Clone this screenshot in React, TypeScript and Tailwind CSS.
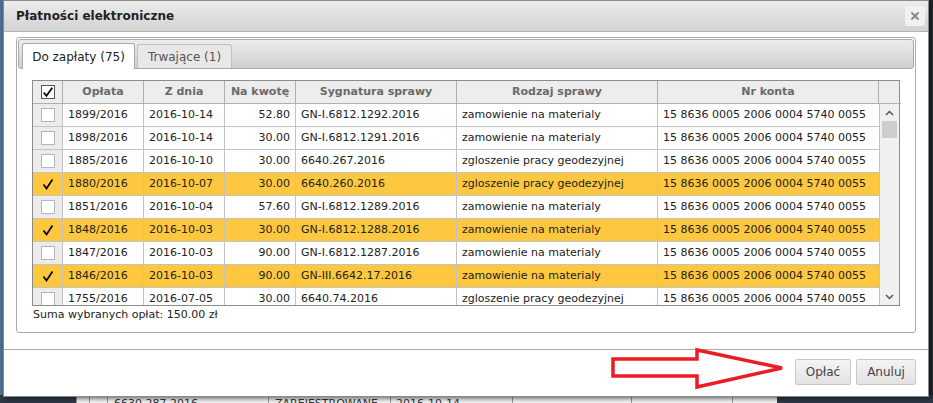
import { X } from "lucide-react";

type Row = {
  nr: string;
  date: string;
  amount: string;
  sig: string;
  kind: string;
  checked?: boolean;
};

const ACCOUNT = "15 8636 0005 2006 0004 5740 0055";

const rows: Row[] = [
  { nr: "1899/2016", date: "2016-10-14", amount: "52.80", sig: "GN-I.6812.1292.2016", kind: "zamowienie na materialy" },
  { nr: "1898/2016", date: "2016-10-14", amount: "30.00", sig: "GN-I.6812.1291.2016", kind: "zamowienie na materialy" },
  { nr: "1885/2016", date: "2016-10-10", amount: "30.00", sig: "6640.267.2016", kind: "zgloszenie pracy geodezyjnej" },
  { nr: "1880/2016", date: "2016-10-07", amount: "30.00", sig: "6640.260.2016", kind: "zgloszenie pracy geodezyjnej", checked: true },
  { nr: "1851/2016", date: "2016-10-04", amount: "57.60", sig: "GN-I.6812.1289.2016", kind: "zamowienie na materialy" },
  { nr: "1848/2016", date: "2016-10-03", amount: "30.00", sig: "GN-I.6812.1288.2016", kind: "zamowienie na materialy", checked: true },
  { nr: "1847/2016", date: "2016-10-03", amount: "90.00", sig: "GN-I.6812.1287.2016", kind: "zamowienie na materialy" },
  { nr: "1846/2016", date: "2016-10-03", amount: "90.00", sig: "GN-III.6642.17.2016", kind: "zamowienie na materialy", checked: true },
  { nr: "1755/2016", date: "2016-07-05", amount: "30.00", sig: "6640.74.2016", kind: "zgloszenie pracy geodezyjnej" },
];

const cols = "grid grid-cols-[30px_81px_81px_71px_161px_201px_221px]";

function Check({ checked }: { checked?: boolean }) {
  if (checked) {
    return (
      <svg width="14" height="14" viewBox="0 0 14 14">
        <path d="M2.5 7.5 L5.5 11.5 L11.5 2.5" fill="none" stroke="#000" strokeWidth="1.7" />
      </svg>
    );
  }
  return <div className="h-[14px] w-[14px] border border-[#b5b5b5] bg-white" />;
}

function TableRow({ r }: { r: Row }) {
  const bg = r.checked ? "bg-[#fdc83f]" : "bg-white";
  const cell = "flex h-[23px] items-center border-b border-r border-[#c3c3c3] px-[5px] whitespace-nowrap overflow-hidden";
  return (
    <div className={`${cols} ${bg}`}>
      <div className={`${cell} justify-center ${r.checked ? "" : "bg-[#ececec]"}`}>
        <Check checked={r.checked} />
      </div>
      <div className={cell}>{r.nr}</div>
      <div className={cell}>{r.date}</div>
      <div className={`${cell} justify-end`}>{r.amount}</div>
      <div className={cell}>{r.sig}</div>
      <div className={cell}>{r.kind}</div>
      <div className={`${cell} border-r-0`}>{ACCOUNT}</div>
    </div>
  );
}

function Header() {
  const h = "flex h-[23px] items-center justify-center border-r border-b border-[#b0b0b0] font-bold text-[#6a6a6a]";
  return (
    <div className="grid grid-cols-[30px_81px_81px_71px_161px_201px_221px_22px] bg-[#ededed]">
      <div className={h}>
        <div className="flex h-[14px] w-[14px] items-center justify-center border border-[#555] bg-white">
          <svg width="12" height="12" viewBox="0 0 14 14">
            <path d="M2 7.5 L5.2 11.5 L12 2" fill="none" stroke="#000" strokeWidth="2" />
          </svg>
        </div>
      </div>
      <div className={h}>Opłata</div>
      <div className={h}>Z dnia</div>
      <div className={h}>Na kwotę</div>
      <div className={h}>Sygnatura sprawy</div>
      <div className={h}>Rodzaj sprawy</div>
      <div className={h}>Nr konta</div>
      <div className="h-[23px] border-b border-[#b0b0b0]" />
    </div>
  );
}

function Scrollbar() {
  return (
    <div className="flex w-[22px] flex-col items-center border-l border-[#c3c3c3] bg-[#f0f0f0]">
      <svg className="mt-[6px]" width="9" height="6" viewBox="0 0 9 6">
        <path d="M1 5 L4.5 1.5 L8 5" fill="none" stroke="#555" strokeWidth="1.5" />
      </svg>
      <div className="mt-[5px] h-[17px] w-[15px] bg-[#cdcdcd]" />
      <div className="flex-1" />
      <svg className="mb-[5px]" width="9" height="6" viewBox="0 0 9 6">
        <path d="M1 1 L4.5 4.5 L8 1" fill="none" stroke="#555" strokeWidth="1.5" />
      </svg>
    </div>
  );
}

export default function App() {
  return (
    <div
      className="relative h-[403px] w-[933px] overflow-hidden bg-[#2e3a48] text-[11px] text-[#222]"
      style={{ fontFamily: '"DejaVu Sans", Verdana, sans-serif' }}
    >
      {/* page behind the dialog */}
      <div className="flex h-full flex-col">
        <div className="flex flex-1">
          <div className="w-[4px] bg-[#4a6f93]" />
          <div className="flex-1" />
          <div className="w-[6px] bg-[#24292f]" />
        </div>
        <div className="flex h-[8px] items-start overflow-hidden text-[11px] leading-[14px] text-[#333]">
          <div className="w-[76px] bg-[#3d4a58]" />
          <div className="flex w-[701px] bg-[#f2f2f2]">
            <div className="w-[13px] border-l border-[#999]" />
            <div className="w-[18px] border-l border-[#999]" />
            <div className="w-[161px] border-l border-[#999] pl-[6px] pt-[2px]">6630.287.2016</div>
            <div className="w-[122px] overflow-hidden whitespace-nowrap border-l border-[#999] pl-[6px] pt-[2px]">ZAREJESTROWANE</div>
            <div className="w-[122px] border-l border-[#999] pl-[5px] pt-[2px]">2016-10-14</div>
            <div className="w-[119px] border-l border-[#999]" />
            <div className="w-[101px] border-l border-[#999]" />
            <div className="flex-1 border-l border-[#999]" />
          </div>
          <div className="flex-1 bg-[#2e3a48]" />
        </div>
      </div>

      {/* dialog */}
      <div className="absolute left-[3px] top-0 flex h-[397px] w-[926px] flex-col border border-[#8a8a8a] bg-white shadow-[2px_2px_4px_rgba(0,0,0,0.5)]">
        <div className="flex h-[31px] items-center justify-between border-b border-[#b3b3b3] bg-gradient-to-b from-[#ececec] to-[#d2d2d2] pl-[12px] pr-[3px]">
          <span className="text-[12px] font-bold text-[#222]">Płatności elektroniczne</span>
          <div className="flex h-[20px] w-[20px] items-center justify-center rounded-[2px] bg-[#f1f1f1] text-[#8a8a8a]">
            <X size={12} strokeWidth={4} />
          </div>
        </div>

        <div className="ml-[12px] mt-[5px] flex h-[296px] w-[900px] flex-col rounded-[3px] border border-[#aaa] p-[1px]">
          <div className="flex h-[30px] items-end rounded-[3px] border border-[#aaa] bg-gradient-to-b from-[#ececec] to-[#cfcfcf] pl-[3px]">
            <div className="-mb-px flex h-[26px] w-[113px] items-center justify-center rounded-t-[3px] border border-b-0 border-[#aaa] bg-white text-[12px] text-[#222]">
              Do zapłaty (75)
            </div>
            <div className="ml-[2px] flex h-[24px] w-[95px] items-center justify-center rounded-t-[3px] border border-b-0 border-[#c0c0c0] bg-[#e8e8e8] text-[12px] text-[#555]">
              Trwające (1)
            </div>
          </div>

          <div className="ml-[14px] mt-[11px] w-[868px] border border-[#8c8c8c]">
            <Header />
            <div className="flex h-[201px] overflow-hidden">
              <div className="w-[846px]">
                {rows.map((r) => (
                  <TableRow key={r.nr} r={r} />
                ))}
              </div>
              <Scrollbar />
            </div>
          </div>
          <div className="ml-[15px] mt-[2px] text-[11px] leading-[14px] text-[#222]">Suma wybranych opłat: 150.00 zł</div>
        </div>

        <div className="mt-[16px] border-t border-[#aaa]" />
        <div className="mr-[12px] mt-[9px] flex justify-end gap-[5px]">
          <button className="h-[26px] w-[56px] rounded-[2px] border border-[#c8c8c8] bg-gradient-to-b from-[#f4f4f4] to-[#e2e2e2] text-[12px] text-[#444]">
            Opłać
          </button>
          <button className="h-[26px] w-[60px] rounded-[2px] border border-[#c8c8c8] bg-gradient-to-b from-[#f4f4f4] to-[#e2e2e2] text-[12px] text-[#444]">
            Anuluj
          </button>
        </div>
      </div>

      {/* red annotation arrow */}
      <svg className="absolute left-[610px] top-[347px]" width="180" height="44" viewBox="0 0 180 44">
        <path
          d="M3 12 L87 12 L87 3 L172 21 L87 40 L87 29 L3 29 Z"
          fill="none"
          stroke="#ec1c24"
          strokeWidth="3.5"
          strokeLinejoin="miter"
        />
      </svg>
    </div>
  );
}
